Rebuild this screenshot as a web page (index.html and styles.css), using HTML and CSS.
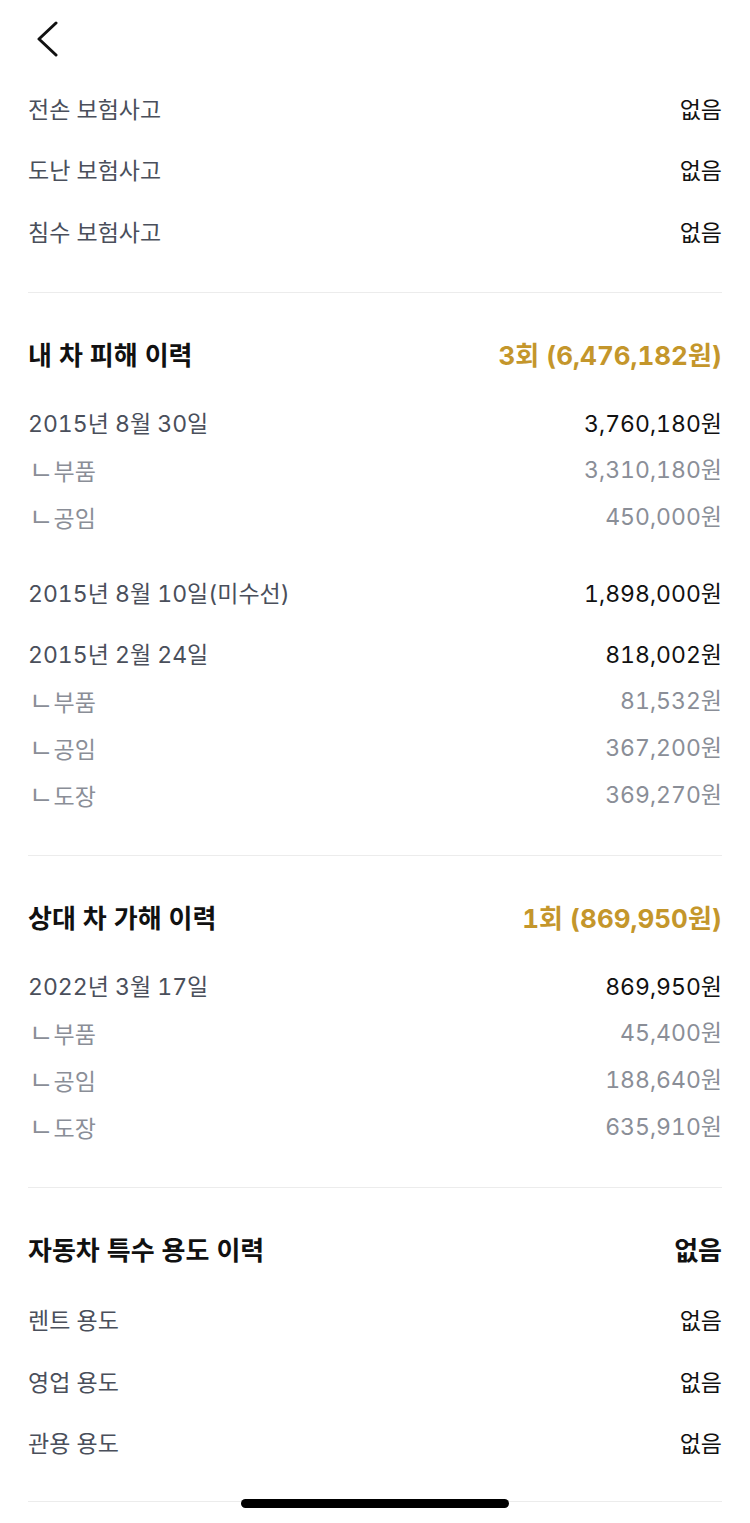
FILE: index.html
```html
<!DOCTYPE html>
<html lang="ko">
<head>
  <meta charset="UTF-8" />
  <title>보험 이력</title>
  <link rel="stylesheet" href="styles.css">
</head>
<body>
  <header class="top-bar">
    <a href="#" class="back-btn" aria-label="뒤로">
      <svg width="24" height="36" viewBox="0 0 24 36">
        <path d="M20 2 L3 18 L20 34" fill="none" stroke="#111" stroke-width="3" stroke-linecap="round" stroke-linejoin="round"/>
      </svg>
    </a>
  </header>

  <!-- 보험사고 -->
  <section class="section section-first">
    <div class="row-simple"><span class="label">전손 보험사고</span><span class="value">없음</span></div>
    <div class="row-simple"><span class="label">도난 보험사고</span><span class="value">없음</span></div>
    <div class="row-simple"><span class="label">침수 보험사고</span><span class="value">없음</span></div>
  </section>

  <!-- 내 차 피해 이력 -->
  <section class="section">
    <div class="section-header">
      <h2>내 차 피해 이력</h2>
      <span class="total">3회 (6,476,182원)</span>
    </div>
    <div class="list">
      <div class="group">
        <div class="row-main"><span class="label">2015년 8월 30일</span><span class="value">3,760,180원</span></div>
        <div class="details">
          <div class="row-sub"><span class="sub-label"><span class="mark">ㄴ</span> 부품</span><span>3,310,180원</span></div>
          <div class="row-sub"><span class="sub-label"><span class="mark">ㄴ</span> 공임</span><span>450,000원</span></div>
        </div>
      </div>
      <div class="group">
        <div class="row-main"><span class="label">2015년 8월 10일(미수선)</span><span class="value">1,898,000원</span></div>
      </div>
      <div class="group">
        <div class="row-main"><span class="label">2015년 2월 24일</span><span class="value">818,002원</span></div>
        <div class="details">
          <div class="row-sub"><span class="sub-label"><span class="mark">ㄴ</span> 부품</span><span>81,532원</span></div>
          <div class="row-sub"><span class="sub-label"><span class="mark">ㄴ</span> 공임</span><span>367,200원</span></div>
          <div class="row-sub"><span class="sub-label"><span class="mark">ㄴ</span> 도장</span><span>369,270원</span></div>
        </div>
      </div>
    </div>
  </section>

  <!-- 상대 차 가해 이력 -->
  <section class="section">
    <div class="section-header">
      <h2>상대 차 가해 이력</h2>
      <span class="total">1회 (869,950원)</span>
    </div>
    <div class="list">
      <div class="group">
        <div class="row-main"><span class="label">2022년 3월 17일</span><span class="value">869,950원</span></div>
        <div class="details">
          <div class="row-sub"><span class="sub-label"><span class="mark">ㄴ</span> 부품</span><span>45,400원</span></div>
          <div class="row-sub"><span class="sub-label"><span class="mark">ㄴ</span> 공임</span><span>188,640원</span></div>
          <div class="row-sub"><span class="sub-label"><span class="mark">ㄴ</span> 도장</span><span>635,910원</span></div>
        </div>
      </div>
    </div>
  </section>

  <!-- 자동차 특수 용도 이력 -->
  <section class="section section-last">
    <div class="section-header">
      <h2>자동차 특수 용도 이력</h2>
      <span class="total total-none">없음</span>
    </div>
    <div class="simple-list">
      <div class="row-simple"><span class="label">렌트 용도</span><span class="value">없음</span></div>
      <div class="row-simple"><span class="label">영업 용도</span><span class="value">없음</span></div>
      <div class="row-simple"><span class="label">관용 용도</span><span class="value">없음</span></div>
    </div>
  </section>

  <div class="home-indicator"></div>
</body>
</html>
```

FILE: styles.css
```css
:root {
  --text: #111111;
  --label: #4a4f5b;
  --sub: #8a8e97;
  --gold: #c4962b;
  --line: #ececec;
}

* {
  box-sizing: border-box;
}

body {
  margin: 0;
  padding: 0 28px;
  background: #fff;
  color: var(--text);
  font-family: Inter, "Noto Sans CJK KR", sans-serif;
  font-size: 23px;
  font-variant-numeric: tabular-nums;
}

.top-bar {
  height: 77px;
  display: flex;
  align-items: center;
}

.back-btn {
  display: flex;
  margin-left: 8px;
  margin-top: 1px;
}

.section {
  border-bottom: 1px solid var(--line);
  padding: 30px 0 21px;
}

.section-first {
  padding: 0 0 30px;
}

.section-last {
  padding-bottom: 28px;
}

.section-header {
  height: 62px;
  display: flex;
  justify-content: space-between;
  align-items: center;
}

.section-header h2 {
  margin: 0;
  font-size: 26px;
  font-weight: 700;
}

.total {
  font-size: 26px;
  font-weight: 700;
  color: var(--gold);
}

.total-none {
  color: var(--text);
}

.list {
  margin-top: 15px;
}

.group + .group {
  margin-top: 14px;
}

.details {
  padding-bottom: 15px;
}

.simple-list {
  margin-top: 9px;
}

.row-simple,
.row-main,
.row-sub {
  display: flex;
  justify-content: space-between;
  align-items: center;
  line-height: 1;
}

.row-simple {
  height: 61.5px;
  padding-top: 5px;
}

.row-main {
  height: 47px;
  padding-top: 3px;
}

.row-sub {
  height: 47px;
  color: var(--sub);
}

.sub-label {
  word-spacing: -6px;
}

.mark {
  font-size: 1.15em;
  margin-left: 1px;
}

.label {
  color: var(--label);
}

.value {
  color: var(--text);
}

.home-indicator {
  position: fixed;
  left: 241px;
  top: 1499px;
  width: 268px;
  height: 9px;
  border-radius: 5px;
  background: #000;
}
```
